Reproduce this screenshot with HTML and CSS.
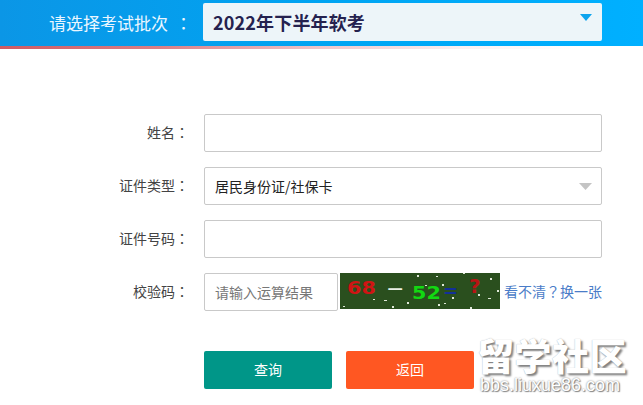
FILE: index.html
```html
<!DOCTYPE html>
<html lang="zh">
<head>
<meta charset="utf-8">
<title>查询</title>
<link rel="stylesheet" href="styles.css">
</head>
<body>
<header class="top">
  <span class="top-label">请选择考试批次<span class="colon colon-top" lang="zh-TW">：</span></span>
  <div class="batch">
    <span class="batch-text">2022年下半年软考</span>
    <svg class="batch-arrow" width="12" height="7" viewBox="0 0 12 7"><path d="M0 0H12L6 7Z"/></svg>
  </div>
</header>
<div class="accent"></div>
<form class="form">
  <div class="row">
    <label class="label">姓名<span class="colon" lang="zh-TW">：</span></label>
    <div class="field"></div>
  </div>
  <div class="row">
    <label class="label">证件类型<span class="colon" lang="zh-TW">：</span></label>
    <div class="field field-select">
      <span>居民身份证/社保卡</span>
      <svg class="select-arrow" width="13" height="7" viewBox="0 0 13 7"><path d="M0 0H13L6.5 7Z"/></svg>
    </div>
  </div>
  <div class="row">
    <label class="label">证件号码<span class="colon" lang="zh-TW">：</span></label>
    <div class="field"></div>
  </div>
  <div class="row">
    <label class="label">校验码<span class="colon" lang="zh-TW">：</span></label>
    <div class="field field-code">请输入运算结果</div>
    <div class="captcha">
      <svg class="specks" width="160" height="36" viewBox="0 0 160 36">
        <g fill="#dfe8d8">
          <rect x="77" y="2" width="2" height="2"/><rect x="96" y="3" width="2" height="1"/><rect x="123" y="0" width="2" height="1"/>
          <rect x="150" y="5" width="2" height="2"/><rect x="157" y="17" width="2" height="2"/><rect x="33" y="26" width="2" height="1"/>
          <rect x="44" y="27" width="3" height="1"/><rect x="67" y="29" width="2" height="2"/><rect x="3" y="33" width="2" height="1"/>
          <rect x="52" y="33" width="2" height="2"/><rect x="98" y="31" width="2" height="2"/><rect x="104" y="30" width="2" height="1"/>
          <rect x="112" y="24" width="2" height="2"/><rect x="130" y="34" width="2" height="2"/><rect x="148" y="25" width="3" height="1"/>
          <rect x="85" y="12" width="2" height="1"/><rect x="102" y="11" width="2" height="2"/><rect x="138" y="21" width="2" height="2"/>
        </g>
      </svg>
      <span class="cap cap-a">68</span>
      <span class="cap cap-b">−</span>
      <span class="cap cap-c">52</span>
      <span class="cap cap-d">=</span>
      <span class="cap cap-e">?</span>
    </div>
    <a class="refresh">看不清<span class="colon" lang="zh-TW">？</span>换一张</a>
  </div>
  <div class="actions">
    <button type="button" class="btn btn-query">查询</button>
    <button type="button" class="btn btn-back">返回</button>
  </div>
</form>
<div class="mark">
  <div class="mark-main">留学社区</div>
  <div class="mark-sub">bbs.liuxue86.com</div>
</div>
</body>
</html>
```

FILE: styles.css
```css
html, body {
  margin: 0;
  padding: 0;
  background: #fff;
}
body {
  position: relative;
  width: 643px;
  height: 405px;
  overflow: hidden;
  font-family: "Noto Sans CJK SC", "Liberation Sans", sans-serif;
  color: #333;
}
.colon {
  font-family: "Noto Sans CJK TC", sans-serif;
}
.colon-top {
  margin-left: 7px;
}
.top {
  display: flex;
  height: 46px;
  box-sizing: border-box;
  padding: 3px 41px 0 49px;
  background: linear-gradient(90deg, #0b96e6 0%, #00a4f2 50%, #00b0ff 100%);
}
.top-label {
  width: 154px;
  line-height: 40px;
  font-size: 17px;
  color: #eaf6ff;
  white-space: nowrap;
}
.batch {
  position: relative;
  width: 399px;
  height: 38px;
  box-sizing: border-box;
  padding-left: 10px;
  background: #edf5f9;
  border-radius: 2px;
  line-height: 38px;
  font-size: 18px;
  font-weight: 700;
  letter-spacing: 0.15px;
  color: #25224f;
}
.batch-arrow {
  position: absolute;
  top: 11px;
  right: 10px;
  fill: #0da4ee;
}
.accent {
  height: 3px;
  background: linear-gradient(90deg, #cf5a63 0%, #dc7f86 25%, #efc5c9 50%, #fbf0f1 72%, #ffffff 90%);
}
.form {
  display: flex;
  flex-direction: column;
  gap: 15px;
  padding: 65px 0 0;
}
.row {
  display: flex;
  align-items: center;
  height: 38px;
}
.label {
  width: 189px;
  margin-right: 15px;
  padding-bottom: 2px;
  text-align: right;
  font-size: 14px;
  color: #444;
  white-space: nowrap;
}
.field {
  width: 398px;
  height: 38px;
  box-sizing: border-box;
  border: 1px solid #c9c9c9;
  border-radius: 2px;
  background: #fff;
}
.field-select {
  display: flex;
  align-items: center;
  justify-content: space-between;
  padding: 0 9px 0 10px;
  font-size: 14px;
  color: #222;
}
.select-arrow {
  fill: #c4c4c4;
}
.field-code {
  width: 134px;
  padding-left: 10px;
  line-height: 36px;
  font-size: 14px;
  color: #777;
  white-space: nowrap;
}
.captcha {
  position: relative;
  flex: none;
  align-self: flex-start;
  width: 160px;
  height: 36px;
  margin-left: 2px;
  background: #2a4f1e;
  overflow: hidden;
  font-family: "DejaVu Sans", sans-serif;
  font-weight: 700;
}
.specks {
  position: absolute;
  top: 0;
  left: 0;
}
.cap {
  position: absolute;
  line-height: 1;
}
.cap-a { left: 7px; top: 6px; font-size: 18px; color: #d01414; transform: scaleX(1.15); transform-origin: left; }
.cap-b { left: 46px; top: 5px; font-size: 22px; color: #e8eee4; font-weight: 400; }
.cap-c { left: 72px; top: 11px; font-size: 18px; color: #12d812; transform: scaleX(1.15); transform-origin: left; }
.cap-d { left: 103px; top: 9px; font-size: 18px; color: #12309a; }
.cap-e { left: 129px; top: 3px; font-size: 20px; color: #b81414; }
.refresh {
  margin: 0 0 3px 4px;
  font-size: 14px;
  color: #4a7cc8;
  white-space: nowrap;
}
.actions {
  display: flex;
  gap: 14px;
  margin: 25px 0 0 204px;
}
.btn {
  width: 128px;
  height: 38px;
  padding: 0 0 2px;
  border: 0;
  border-radius: 2px;
  font: 14px "Noto Sans CJK SC", sans-serif;
  color: #fff;
}
.btn-query { background: #009688; }
.btn-back { background: #ff5722; }
.mark {
  position: absolute;
  left: 477px;
  top: 336px;
  width: 166px;
  color: #fff;
}
.mark-main {
  height: 39px;
  font-size: 37px;
  line-height: 38px;
  font-weight: 900;
  letter-spacing: 0.5px;
  text-shadow: 2px 2px 2px #808080, 0 0 1px #aaa;
  white-space: nowrap;
}
.mark-sub {
  margin: 2px 0 0 3px;
  font-family: "Liberation Sans", sans-serif;
  font-size: 18px;
  line-height: 16px;
  text-shadow: 0 0 2px #777, 1px 1px 1px #888;
  white-space: nowrap;
}
```
